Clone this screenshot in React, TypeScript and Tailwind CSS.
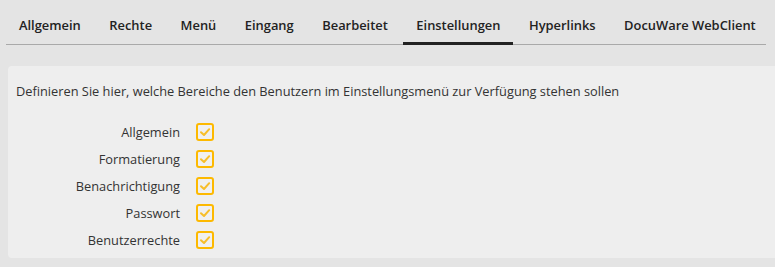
import React from 'react';

const tabs = ['Allgemein', 'Rechte', 'Menü', 'Eingang', 'Bearbeitet', 'Einstellungen', 'Hyperlinks', 'DocuWare WebClient'];
const active = 'Einstellungen';

const options = ['Allgemein', 'Formatierung', 'Benachrichtigung', 'Passwort', 'Benutzerrechte'];

function CheckBox() {
  return (
    <span className="w-[18px] h-[18px] border-2 border-[#fdb900] rounded-[3px] flex items-center justify-center bg-[#f0f0f0]">
      <svg width="14" height="14" viewBox="0 0 14 14" fill="none">
        <path d="M3 7.2 L6 10 L11.2 4.2" stroke="#f7be2a" strokeWidth="2" strokeLinecap="round" strokeLinejoin="round" />
      </svg>
    </span>
  );
}

export default function App() {
  return (
    <div className="h-[267px] w-full bg-[#e4e4e4] text-[#333] overflow-hidden" style={{ fontFamily: '"Open Sans", "Liberation Sans", sans-serif' }}>
      {/* tab bar */}
      <div className="ml-[6px] w-[760px] flex items-start gap-[2.5px] border-b border-[#a9a9a9]">
        {tabs.map((t) => (
          <div
            key={t}
            className={
              t === active
                ? 'whitespace-nowrap px-[13px] pt-[16px] pb-[8px] leading-[18px] text-[12.9px] font-semibold text-[#222] border-b-[3px] border-[#222] -mb-px'
                : 'whitespace-nowrap px-[13px] pt-[16px] pb-[10px] leading-[18px] text-[12.9px] font-semibold text-[#222]'
            }
          >
            {t}
          </div>
        ))}
      </div>

      {/* settings panel */}
      <div className="ml-2 mt-[21px] bg-[#eeeeee] rounded-l-[4px] pl-2 pt-[16px] pb-[5px]">
        <p className="text-[12.8px] leading-[18px] whitespace-nowrap">
          Definieren Sie hier, welche Bereiche den Benutzern im Einstellungsmenü zur Verfügung stehen sollen
        </p>
        <div className="mt-[18px] flex flex-col">
          {options.map((o) => (
            <div key={o} className="h-[27px] flex items-center gap-4">
              <span className="w-[164px] text-right text-[12.8px] leading-[18px]">{o}</span>
              <CheckBox />
            </div>
          ))}
        </div>
      </div>
    </div>
  );
}
